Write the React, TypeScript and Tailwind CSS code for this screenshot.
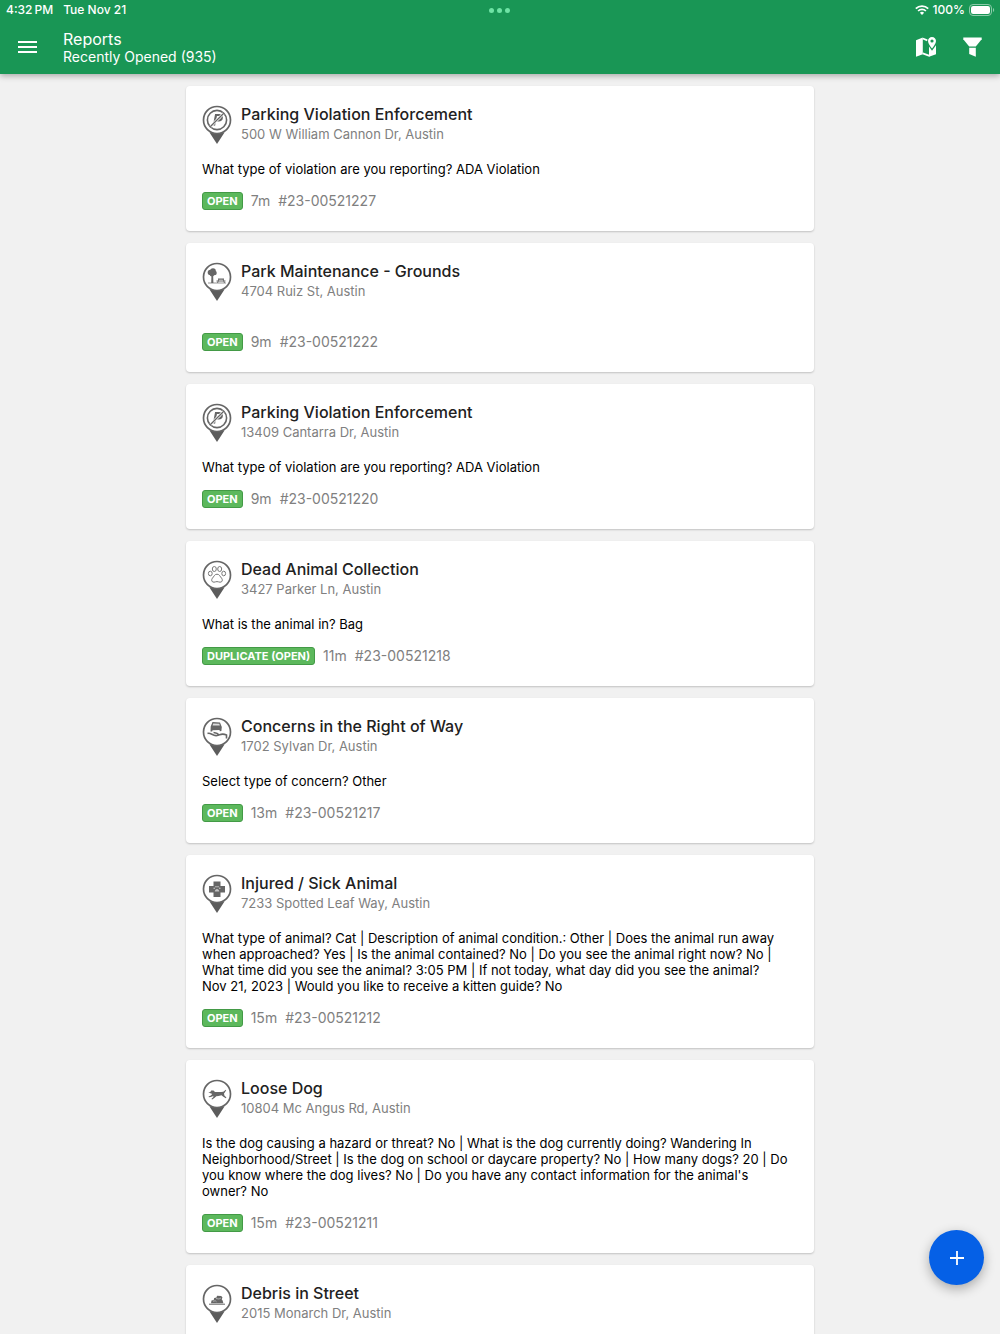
import type { ReactNode } from 'react'

type IconName = 'parking' | 'park' | 'paw' | 'car' | 'medical' | 'dog' | 'debris'

interface Report {
  title: string
  address: string
  icon: IconName
  description?: string
  status?: string
  age?: string
  number?: string
}

const REPORTS: Report[] = [
  {
    title: 'Parking Violation Enforcement',
    address: '500 W William Cannon Dr, Austin',
    icon: 'parking',
    description: 'What type of violation are you reporting? ADA Violation',
    status: 'OPEN',
    age: '7m',
    number: '#23-00521227',
  },
  {
    title: 'Park Maintenance - Grounds',
    address: '4704 Ruiz St, Austin',
    icon: 'park',
    status: 'OPEN',
    age: '9m',
    number: '#23-00521222',
  },
  {
    title: 'Parking Violation Enforcement',
    address: '13409 Cantarra Dr, Austin',
    icon: 'parking',
    description: 'What type of violation are you reporting? ADA Violation',
    status: 'OPEN',
    age: '9m',
    number: '#23-00521220',
  },
  {
    title: 'Dead Animal Collection',
    address: '3427 Parker Ln, Austin',
    icon: 'paw',
    description: 'What is the animal in? Bag',
    status: 'DUPLICATE (OPEN)',
    age: '11m',
    number: '#23-00521218',
  },
  {
    title: 'Concerns in the Right of Way',
    address: '1702 Sylvan Dr, Austin',
    icon: 'car',
    description: 'Select type of concern? Other',
    status: 'OPEN',
    age: '13m',
    number: '#23-00521217',
  },
  {
    title: 'Injured / Sick Animal',
    address: '7233 Spotted Leaf Way, Austin',
    icon: 'medical',
    description:
      'What type of animal? Cat | Description of animal condition.: Other | Does the animal run away when approached? Yes | Is the animal contained? No | Do you see the animal right now? No | What time did you see the animal? 3:05 PM | If not today, what day did you see the animal? Nov\u00a021, 2023 | Would you like to receive a kitten guide? No',
    status: 'OPEN',
    age: '15m',
    number: '#23-00521212',
  },
  {
    title: 'Loose Dog',
    address: '10804 Mc Angus Rd, Austin',
    icon: 'dog',
    description:
      "Is the dog causing a hazard or threat? No | What is the dog currently doing? Wandering In Neighborhood/Street | Is the dog on school or daycare property? No | How many dogs? 20 | Do you know where the dog lives? No | Do you have any contact information for the animal's owner?\u00a0No",
    status: 'OPEN',
    age: '15m',
    number: '#23-00521211',
  },
  {
    title: 'Debris in Street',
    address: '2015 Monarch Dr, Austin',
    icon: 'debris',
  },
]

// Glyphs sit inside the pin head, a circle of radius 14 around (15, 15)
const GLYPHS: Record<IconName, ReactNode> = {
  parking: (
    <g fill="none" stroke="#666">
      <circle cx="15" cy="15" r="9.6" strokeWidth="1.6" />
      <path d="M12 20.500 14 10h3c4 0 3.600 5.500-.4 5.500h-3" strokeWidth="2.200" />
      <path d="m8.500 21.500 13-13" stroke="#fff" strokeWidth="2.600" />
      <path d="m8.200 21.800 13.600-13.600" strokeWidth="1.300" />
    </g>
  ),
  park: (
    <g fill="#666">
      <circle cx="8.500" cy="10.500" r="2.800" />
      <circle cx="11" cy="9" r="2.800" />
      <circle cx="12.500" cy="11" r="2.300" />
      <circle cx="10" cy="12.200" r="2.300" />
      <path d="M9.500 12h1.600l.3 9H9.200z" />
      <path d="M6 20.500h18v1H6z" opacity=".7" />
      <path d="M16 16.500h6v1.200h-6zM14.500 18.500h9v1.100h-9z" />
      <path d="m17 17-1.500 4M21 17l1.500 4" stroke="#666" strokeWidth=".9" />
    </g>
  ),
  paw: (
    <g fill="none" stroke="#777" strokeWidth="1">
      <ellipse cx="12.300" cy="9" rx="2" ry="2.500" />
      <ellipse cx="17.700" cy="9" rx="2" ry="2.500" />
      <ellipse cx="8.300" cy="13.500" rx="1.900" ry="2.300" />
      <ellipse cx="21.700" cy="13.500" rx="1.900" ry="2.300" />
      <path d="M15 14.200c2.700 0 3 2.500 4.600 4 1.300 1.500.8 4.300-1.600 4-1.200-.1-1.700-.6-3-.6s-1.800.5-3 .6c-2.400.3-2.900-2.500-1.600-4 1.600-1.500 1.900-4 4.600-4z" />
    </g>
  ),
  car: (
    <g fill="#666">
      <path d="m10.500 5 7.500.5 1.800 4.500-.4 4-1.600.2-.3-1.200-7 .2-.3 1.300H8.500l.2-5z" />
      <path d="m11.200 6.500 6 .3.700 1.700-7.300-.1z" fill="#ddd" />
      <path
        d="M5.500 16.500c3-1.500 5.500 3 9.500 2s5-2.500 9.500-.5v3.500M11.500 15.500c3 .5 4.500 1 5.500 2.500"
        fill="none"
        stroke="#666"
        strokeWidth="1.600"
      />
    </g>
  ),
  medical: (
    <g>
      <path d="M11.500 7.500h7V12H23v6.500h-4.500V23h-7v-4.500H7V12h4.500z" fill="#666" />
      <g fill="#c4c4c4">
        <circle cx="12.200" cy="14.200" r=".8" />
        <circle cx="14" cy="12.700" r=".8" />
        <circle cx="16" cy="12.700" r=".8" />
        <circle cx="17.800" cy="14.200" r=".8" />
        <path d="M12.800 17.500c0-1.600 1.100-2.500 2.200-2.500s2.200.9 2.200 2.500z" />
      </g>
    </g>
  ),
  dog: (
    <path
      d="m6.300 13.500 2-.5.900-1.600 2.300.2 1.500 1.300 6 .1 2.300-.3 2.500-1.900.4.500-1.600 2.500-.6.700.4 2 2 2-.6.800-2.800-1.700-1.500-1.300-3 .7-2.200.3-1.600 1.400-2.500 1.900-.8-.6 2-2-.1-1-2.400.9-2 .3-.3-.8 2.300-.9 1.300-1.500-1-.4z"
      fill="#666"
    />
  ),
  debris: (
    <g fill="#666">
      <path d="M7 19.700h16v1H7z" />
      <path d="m9 19.200.5-2.700 2.200-.6.500-2 2.300-.3.500-1.800 4.200.1 1.300 1.700-.8 1.700.9 1.300.8 2.600z" />
      <path d="m11 17.200 2.300-.4 1.200 1M14 14.500l3 .5 2-1" fill="none" stroke="#ddd" strokeWidth=".6" />
    </g>
  ),
}

function PinIcon({ name }: { name: IconName }) {
  return (
    <svg viewBox="0 0 30 39" className="w-[30px] h-[39px] mt-px shrink-0" aria-hidden="true">
      <path d="M7.500 27.500 15 39l7.500-11.500z" fill="#5c5c5c" />
      <circle cx="15" cy="15" r="13.500" fill="#fff" stroke="#666" strokeWidth="1.700" />
      {GLYPHS[name]}
    </svg>
  )
}

function StatusBar() {
  return (
    <div className="grid grid-cols-3 items-center h-5 text-xs font-medium">
      <div className="flex gap-[10px] pl-[6px]">
        <span>{'4:32\u2009PM'}</span>
        <span>Tue Nov 21</span>
      </div>
      <div className="flex justify-center gap-[3px]">
        <span className="size-[5px] rounded-full bg-[#6fe3a5]" />
        <span className="size-[5px] rounded-full bg-[#6fe3a5]" />
        <span className="size-[5px] rounded-full bg-[#6fe3a5]" />
      </div>
      <div className="flex items-center justify-end gap-1 pr-[5px]">
        <svg viewBox="0 0 14 10" className="w-[14px] h-[10px]" aria-hidden="true">
          <g fill="none" stroke="#fff" strokeWidth="1.700">
            <path d="M.8 3.700a8.800 8.800 0 0 1 12.400 0" />
            <path d="M3.100 6a5.500 5.500 0 0 1 7.800 0" />
          </g>
          <path d="M7 10 4.900 7.800a3 3 0 0 1 4.200 0z" fill="#fff" />
        </svg>
        <span>100%</span>
        <svg viewBox="0 0 26 12" className="w-[26px] h-3" aria-hidden="true">
          <rect x=".5" y=".5" width="22" height="11" rx="3.500" fill="none" stroke="#8ccbaa" />
          <rect x="2" y="2" width="19" height="8" rx="2.200" fill="#fff" />
          <path d="M24 4c1.600.6 1.600 3.400 0 4z" fill="#8ccbaa" />
        </svg>
      </div>
    </div>
  )
}

function Toolbar() {
  return (
    <div className="flex items-center h-[54px] px-[18px]">
      <button type="button" aria-label="Menu" className="w-[19px]">
        <svg viewBox="0 0 19 12" className="w-[19px] h-3" aria-hidden="true">
          <path d="M0 1h19M0 6h19M0 11h19" stroke="#fff" strokeWidth="1.800" />
        </svg>
      </button>
      <div className="flex-1 ml-[26px] pt-[2px]">
        <h1 className="text-base leading-[18px]">Reports</h1>
        <p className="text-sm leading-[18px]">Recently Opened (935)</p>
      </div>
      <div className="flex items-center gap-[26px]">
        <button type="button" aria-label="Map">
          <svg viewBox="0 0 21 20" className="w-[21px] h-5" fill="#fff" aria-hidden="true">
            <path d="M0 3.200 6.800.5v16.700L0 19.700z" />
            <path
              d="m6.800 1.500 4.500 1.800M6.800 16.300l6.700 2.500"
              fill="none"
              stroke="#fff"
              strokeWidth="1.800"
            />
            <path d="M13 9.500l3 4.300 4-5.500v9l-7 2.500z" />
            <path
              fillRule="evenodd"
              d="M16 0c2.300 0 4 1.700 4 4 0 2.600-2.600 5.600-4 7.600-1.400-2-4-5-4-7.600 0-2.300 1.700-4 4-4zm0 2.400a1.600 1.600 0 1 0 0 3.200 1.600 1.600 0 0 0 0-3.200z"
            />
          </svg>
        </button>
        <button type="button" aria-label="Filter">
          <svg viewBox="0 0 19 20" className="w-[19px] h-5" fill="#fff" aria-hidden="true">
            <path d="M.3.500h18.400v1.800l-5.900 7.200H6.200L.3 2.300z" />
            <path d="M6.200 10.800h6.600v9L6.200 17z" />
          </svg>
        </button>
      </div>
    </div>
  )
}

function ReportCard({ report }: { report: Report }) {
  return (
    <li className="flex flex-col px-4 pt-[18px] pb-[21px] bg-white rounded-[4px] shadow-[0_1px_2px_rgba(0,0,0,0.2)]">
      <div className="flex gap-[9px] h-10">
        <PinIcon name={report.icon} />
        <div>
          <h2 className="text-base leading-5 font-medium text-[#212121]">{report.title}</h2>
          <p className="text-[13px] leading-5 text-[#808080]">{report.address}</p>
        </div>
      </div>
      <p className="mt-[17px] text-[13px] leading-4 text-black">{report.description}</p>
      {report.status && (
        <div className="flex items-center gap-2 h-[18px] mt-[15px] text-sm text-[#808080]">
          <span className="px-1 border border-[#439a46] rounded-[3px] bg-[#5cb85c] text-[11px] leading-4 font-bold text-white">
            {report.status}
          </span>
          <span>{report.age}</span>
          <span>{report.number}</span>
        </div>
      )}
    </li>
  )
}

export default function App() {
  return (
    <div className="relative flex flex-col h-screen overflow-hidden bg-[#f1f1f1] font-['Inter','Liberation_Sans',sans-serif]">
      <header className="z-10 shrink-0 bg-[#199655] text-white shadow-[0_2px_6px_rgba(0,0,0,0.3)]">
        <StatusBar />
        <Toolbar />
      </header>
      <main className="flex-1 min-h-0 overflow-y-auto [scrollbar-width:none]">
        <ul className="flex flex-col gap-3 w-full max-w-[628px] mx-auto py-3">
          {REPORTS.map((report, i) => (
            <ReportCard key={report.number ?? i} report={report} />
          ))}
        </ul>
      </main>
      <button
        type="button"
        aria-label="New report"
        className="absolute right-4 bottom-[49px] flex items-center justify-center size-[55px] rounded-full bg-[#0560e6] shadow-[0_4px_12px_rgba(0,0,0,0.3)]"
      >
        <svg viewBox="0 0 14 14" className="size-[14px]" aria-hidden="true">
          <path d="M7 0v14M0 7h14" stroke="#fff" strokeWidth="1.800" />
        </svg>
      </button>
    </div>
  )
}
